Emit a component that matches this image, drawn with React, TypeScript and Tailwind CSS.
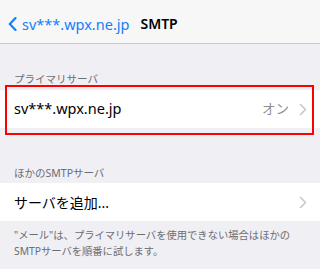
import React from 'react';

const font = "font-['Noto_Sans','Noto_Sans_CJK_JP',sans-serif]";

const Chevron: React.FC = () => (
  <svg width="8" height="13" viewBox="0 0 8 13" fill="none" className="shrink-0">
    <path d="M1.5 1.5L6.5 6.5L1.5 11.5" stroke="#c7c7cc" strokeWidth="1.6" strokeLinecap="round" strokeLinejoin="round" />
  </svg>
);

const App: React.FC = () => {
  return (
    <div className={`min-h-screen bg-[#efeff4] ${font}`}>
      {/* navigation bar */}
      <div className="h-[44px] pt-[5px] bg-[#f7f7f7] border-b border-[#c8c7cc] flex items-center">
        <div className="flex items-center pl-[8px] text-[#157efb]">
          <svg width="9" height="14" viewBox="0 0 9 14" fill="none">
            <path d="M7.5 1L1.8 7L7.5 13" stroke="currentColor" strokeWidth="2.2" strokeLinecap="round" strokeLinejoin="round" />
          </svg>
          <span className="ml-[5px] text-[14.5px] leading-none">sv***.wpx.ne.jp</span>
        </div>
        <span className="ml-[11px] text-[14px] font-semibold leading-none text-black">SMTP</span>
      </div>

      {/* primary server */}
      <div className="h-[46px] px-[14px] pt-[28px] text-[10.5px] leading-[14px] text-[#6d6d72]">プライマリサーバ</div>
      <div className="relative">
        <div className="h-[38px] bg-white flex items-center pl-[14px] pr-[13px]">
          <span className="flex-1 text-[14.5px] text-black">sv***.wpx.ne.jp</span>
          <span className="text-[13.5px] text-[#8e8e93] mr-[10px]">オン</span>
          <Chevron />
        </div>
        <div className="absolute left-[5px] right-[6px] top-[-5px] bottom-[-7px] border-2 border-[#ff0000] pointer-events-none" />
      </div>

      {/* other servers */}
      <div className="h-[55px] px-[14px] pt-[38px] text-[10.5px] leading-[14px] text-[#6d6d72]">ほかのSMTPサーバ</div>
      <div className="h-[38px] bg-white flex items-center pl-[14px] pr-[13px]">
        <span className="flex-1 text-[14px] text-black">サーバを追加...</span>
        <Chevron />
      </div>
      <p className="px-[14px] pt-[6px] text-[10.3px] leading-[16px] text-[#6d6d72]">
        "メール"は、プライマリサーバを使用できない場合はほかの
        <br />
        SMTPサーバを順番に試します。
      </p>
    </div>
  );
};

export default App;
